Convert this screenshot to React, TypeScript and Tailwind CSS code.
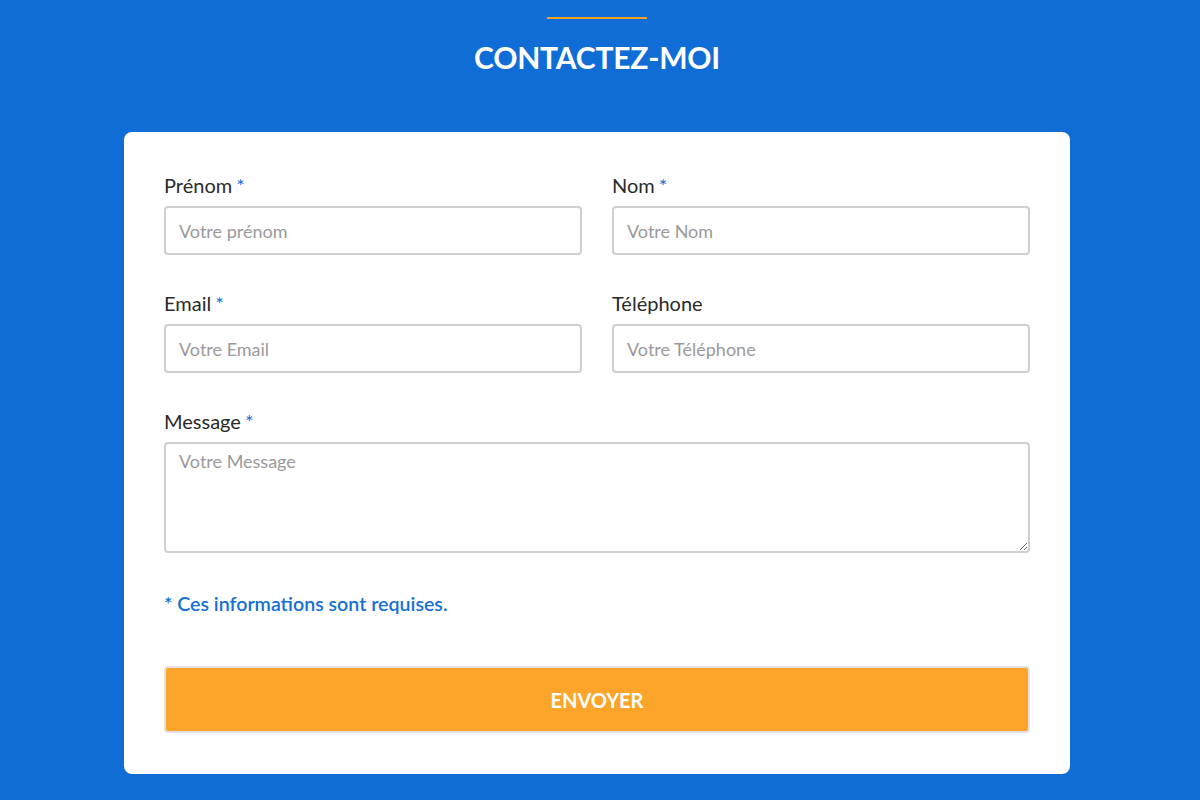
import type { ReactNode } from 'react';

const font = { fontFamily: 'Lato, "Open Sans", sans-serif' };

function Label({ children, required }: { children: ReactNode; required?: boolean }) {
  return (
    <label className="block text-[20px] leading-[27px] text-[#2a2a2a] mb-[7px]">
      {children}
      {required && <span className="text-[#1570d4] ml-[4px]">*</span>}
    </label>
  );
}

const inputCls =
  'block w-full h-[49px] px-[13px] border-2 border-[#cfcfcf] rounded-[4px] text-[18px] text-[#333] placeholder:text-[#9a9a9a] outline-none bg-white';

export default function App() {
  return (
    <div className="min-h-[800px] bg-[#116dd6] flex flex-col items-center pt-[17px] pr-[6px]" style={font}>
      <div className="w-[100px] h-[2px] bg-[#f7a122]" />
      <h1 className="mt-[18px] text-[30px] leading-[40px] font-bold text-white tracking-[-0.2px]">
        CONTACTEZ-MOI
      </h1>

      <form className="mt-[55px] w-[946px] bg-white rounded-[8px] px-[40px] pt-[40px] pb-[41px]">
        <div className="grid grid-cols-2 gap-x-[30px] gap-y-[35px]">
          <div>
            <Label required>Prénom</Label>
            <input className={inputCls} placeholder="Votre prénom" />
          </div>
          <div>
            <Label required>Nom</Label>
            <input className={inputCls} placeholder="Votre Nom" />
          </div>
          <div>
            <Label required>Email</Label>
            <input className={inputCls} placeholder="Votre Email" />
          </div>
          <div>
            <Label>Téléphone</Label>
            <input className={inputCls} placeholder="Votre Téléphone" />
          </div>
          <div className="col-span-2">
            <Label required>Message</Label>
            <textarea
              className="block w-full h-[111px] px-[13px] py-[4px] border-2 border-[#cfcfcf] rounded-[4px] text-[18px] text-[#333] placeholder:text-[#9a9a9a] outline-none resize-y"
              placeholder="Votre Message"
            />
          </div>
        </div>

        <p className="mt-[37px] text-[19.6px] leading-[27px] font-semibold text-[#1570d4]">
          * Ces informations sont requises.
        </p>

        <button
          type="button"
          className="mt-[49px] w-full h-[67px] bg-[#fda42a] border-2 border-[#e2e2e2] rounded-[4px] text-white text-[20px] font-bold"
        >
          ENVOYER
        </button>
      </form>
    </div>
  );
}
